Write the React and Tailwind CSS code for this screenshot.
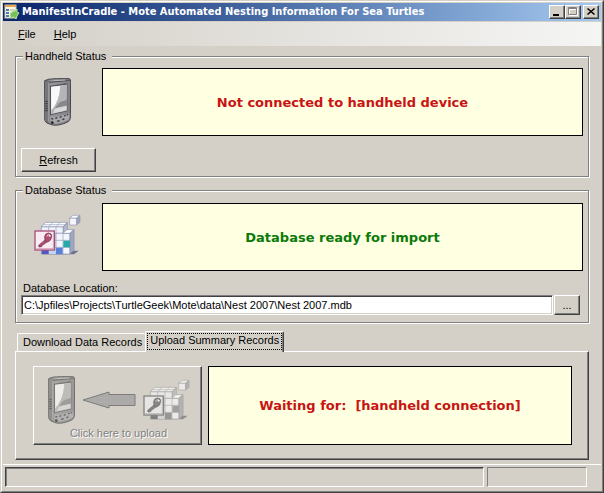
import React from "react";

const raised =
  "border border-t-white border-l-white border-r-[#404040] border-b-[#404040] shadow-[inset_-1px_-1px_0_#808080] bg-[#d4d0c8]";

const HandheldIcon = () => (
  <svg width="28" height="48" viewBox="0 0 84 144" className="shrink-0" aria-hidden="true">
    <defs>
      <linearGradient id="case" x1="0" y1="0" x2="1" y2="0">
        <stop offset="0" stopColor="#5c5c60" />
        <stop offset="0.25" stopColor="#98989c" />
        <stop offset="1" stopColor="#808084" />
      </linearGradient>
      <linearGradient id="glass" x1="0" y1="0" x2="1" y2="1">
        <stop offset="0" stopColor="#f4f4f4" />
        <stop offset="0.5" stopColor="#d8d8d8" />
        <stop offset="1" stopColor="#a4a4a4" />
      </linearGradient>
    </defs>
    <path d="M5 8 Q14 2 40 2 L78 2 Q83 3 83 9 L82 122 Q80 132 62 137 Q42 144 28 141 L12 135 Q5 131 5 124Z" fill="url(#case)" stroke="#444448" strokeWidth="3" />
    <path d="M6 9 L17 13 L17 132 L8 130 Q5 126 5 120Z" fill="#77777b" />
    <path d="M17 13 L80 7" stroke="#54545a" strokeWidth="4" />
    <path d="M31 8 L67 6" stroke="#b8b8bc" strokeWidth="3" />
    <path d="M17 14 L17 131" stroke="#b4b4b8" strokeWidth="2" />
    <path d="M21 23 L73 16 L73 100 L21 112Z" fill="#505054" />
    <path d="M24 26 L71 20 L71 98 L24 108Z" fill="url(#glass)" />
    <path d="M25 27 L52 24 Q49 72 25 97Z" fill="#f8f8f8" />
    <path d="M71 20 L71 64 Q45 70 36 105 L25 107 L25 97 Q49 72 52 24Z" fill="#b4b4b6" />
    <path d="M71 65 L71 83 L36 91 Q43 77 52 72Z" fill="#88888c" />
    <path d="M71 83 L71 97 L30 106 L36 92Z" fill="#d8d8d8" />
    <path d="M7 70h7M7 77h7M7 84h7M7 91h7M7 98h7" stroke="#303034" strokeWidth="3" />
    <path d="M22 118 Q48 117 79 105 L79 123 Q60 134 35 136 Q22 133 22 118Z" fill="#a8a8ac" />
    <path d="M25 123l6-1M37 121l6-2M50 118l6-2M63 114l5-2M71 111l5-2M42 130l8-2M58 125l6-2" stroke="#38383c" strokeWidth="4" />
    <circle cx="28" cy="134" r="4" fill="#242428" />
  </svg>
);

const DatabaseIcon = () => (
  <svg width="47" height="42" viewBox="0 0 141 126" className="shrink-0" aria-hidden="true">
    <path d="M22 121 L120 121 L134 110 L110 110Z" fill="#70708c" />
    <path d="M22 38 L88 38 L88 120 L22 120Z" fill="#eef2fa" stroke="#8890ac" strokeWidth="2" />
    <path d="M22 38 L35 25 L100 25 L88 38Z" fill="#fff" stroke="#8890ac" strokeWidth="2" />
    <path d="M88 38 L100 25 L100 50 L88 60Z" fill="#b0b8cc" stroke="#8890ac" strokeWidth="2" />
    <path d="M44 38 L57 25 M66 38 L79 25 M44 38V120 M66 38V120 M28 32H94 M22 58H88 M22 79H88 M22 100H88" stroke="#98a0bc" strokeWidth="2" />
    <path d="M66 58 H108 V120 H66Z" fill="#f3f6fc" stroke="#8890ac" strokeWidth="2" />
    <path d="M87 58 L98 47 L120 47 L108 58Z" fill="#fff" stroke="#8890ac" strokeWidth="2" />
    <path d="M108 58 L120 47 L120 109 L108 120Z" fill="#a0a8c0" stroke="#8088a8" strokeWidth="2" />
    <path d="M87 58V120 M66 79H108 L120 68 M66 100H108 L120 89" fill="none" stroke="#98a0bc" strokeWidth="2" />
    <rect x="88" y="80" width="20" height="20" fill="#28a8a8" />
    <rect x="23" y="105" width="21" height="15" fill="#5058c0" />
    <rect x="66" y="101" width="20" height="19" fill="#5880d8" />
    <rect x="45" y="108" width="20" height="12" fill="#c4d4f4" />
    <path d="M107 12 L128 12 L128 33 L107 33Z" fill="#f4f6fc" stroke="#9498b0" strokeWidth="2" />
    <path d="M107 12 L117 4 L138 4 L128 12Z" fill="#fff" stroke="#9498b0" strokeWidth="2" />
    <path d="M128 12 L138 4 L138 25 L128 33Z" fill="#9ca4bc" stroke="#9498b0" strokeWidth="2" />
    <rect x="3" y="51" width="58" height="57" fill="#f8ecf2" stroke="#a85078" strokeWidth="4" />
    <path d="M7 104 H58 V55" fill="none" stroke="#d8a8c0" strokeWidth="3" />
    <path d="M34 77 L14 94 L15 99 L23 98 L25 93 L31 90 L40 83Z" fill="#b05070" stroke="#702848" strokeWidth="2" />
    <path d="M32 67 Q34 57 44 57 Q54 58 53 67 Q52 81 41 84 Q31 83 32 67Z" fill="#b05070" stroke="#702848" strokeWidth="2" />
    <path d="M38 67 Q41 61 47 62" fill="none" stroke="#e8a8bc" strokeWidth="4" />
    <circle cx="47" cy="65" r="3" fill="#fff" />
  </svg>
);

const AppIcon = () => (
  <svg width="16" height="16" viewBox="0 0 16 16" className="shrink-0" aria-hidden="true">
    <rect x="1" y="1" width="11" height="13" fill="#f8f8e8" stroke="#c8c8b0" />
    <rect x="1" y="1" width="11" height="2" fill="#e8a850" />
    <path d="M2 6h3M2 9h3M2 12h3" stroke="#5078b0" strokeWidth="2" />
    <path d="M6 6h5M6 9h5M6 12h4" stroke="#a8b890" />
    <path d="M6 11 Q7 7 11 7 L13 5 L13 8 L15 9 L13 12 L12 15 L10 13 L7 14Z" fill="#78c058" stroke="#b0e098" />
  </svg>
);

const ArrowIcon = () => (
  <svg width="54" height="18" viewBox="0 0 54 18" className="shrink-0" aria-hidden="true">
    <path d="M1 9 L27 1 V3.5 H53 V14.5 H27 V17Z" fill="#9c9c9c" stroke="#585858" />
  </svg>
);

const StatusBox = ({ className, children }) => (
  <div
    role="status"
    className={`flex flex-1 items-center justify-center whitespace-pre border border-black bg-[#ffffe1] font-['DejaVu_Sans',Verdana,sans-serif] text-[13px] font-bold ${className}`}
  >
    {children}
  </div>
);

const Group = ({ title, children }) => (
  <fieldset className="min-w-0 border border-[#808080] px-[5px] shadow-[1px_1px_0_#fff,inset_1px_1px_0_#fff]">
    <legend className="ml-[2px] bg-[#d4d0c8] pl-[2px] pr-[6px] leading-[12px]">{title}</legend>
    {children}
  </fieldset>
);

const TitleBar = () => (
  <header className="flex h-[18px] items-center bg-linear-to-r from-[#0a246a] to-[#a6caf0] pl-[1px] pr-[2px]">
    <AppIcon />
    <h1 className="ml-[2px] flex-1 truncate font-['DejaVu_Sans_Condensed','DejaVu_Sans',Tahoma,sans-serif] text-[11px] font-bold leading-[18px] text-white">
      ManifestInCradle - Mote Automated Nesting Information For Sea Turtles
    </h1>
    <div className="flex">
      <button aria-label="Minimize" className={`h-[14px] w-4 ${raised}`}>
        <svg width="14" height="12" viewBox="0 0 14 12">
          <path d="M3 9h6" stroke="#000" strokeWidth="2" />
        </svg>
      </button>
      <button aria-label="Maximize" disabled className={`h-[14px] w-4 ${raised}`}>
        <svg width="14" height="12" viewBox="0 0 14 12">
          <path d="M3.5 2.5h8v7h-8z M3.5 3.5h8" fill="none" stroke="#fff" />
          <path d="M2.5 1.5h8v7h-8z M2.5 2.5h8" fill="none" stroke="#808080" />
        </svg>
      </button>
      <button aria-label="Close" className={`ml-[2px] h-[14px] w-4 ${raised}`}>
        <svg width="14" height="12" viewBox="0 0 14 12">
          <path d="M3.5 2.5l7 6M10.5 2.5l-7 6" stroke="#000" strokeWidth="1.6" />
        </svg>
      </button>
    </div>
  </header>
);

const App = () => {
  return (
    <div className="flex min-h-screen flex-col border border-t-[#d4d0c8] border-l-[#d4d0c8] border-r-[#404040] border-b-[#404040] bg-[#d4d0c8] font-['Liberation_Sans',Arial,sans-serif] text-[11px] leading-[13px] text-black">
      <div className="flex flex-1 flex-col border border-t-white border-l-white border-r-[#808080] border-b-[#808080] p-[1px]">
        <TitleBar />
        <nav className="mt-[1px] flex h-6 items-center gap-[18px] bg-linear-to-r from-[#d4d0c8] to-[#f5f5f4] pl-[15px]">
          <button>
            <u>F</u>ile
          </button>
          <button>
            <u>H</u>elp
          </button>
        </nav>

        <main className="flex flex-1 flex-col pl-3 pr-3 pt-1">
          <Group title="Handheld Status">
            <div className="mt-[6px] flex">
              <div className="flex w-[81px] justify-center pl-[22px] pr-[31px] pt-[10px]">
                <HandheldIcon />
              </div>
              <StatusBox className="h-[68px] text-[#c81414]">Not connected to handheld device</StatusBox>
            </div>
            <button className={`mb-1 mt-3 h-6 w-[75px] ${raised}`}>
              <u>R</u>efresh
            </button>
          </Group>

          <div className="mt-[7px]">
            <Group title="Database Status">
              <div className="mt-[7px] flex">
                <div className="flex w-[81px] pl-[13px] pt-[11px]">
                  <DatabaseIcon />
                </div>
                <StatusBox className="h-[68px] text-[#0a7a0a]">Database ready for import</StatusBox>
              </div>
              <label htmlFor="location" className="ml-[2px] mt-[11px] block">
                Database Location:
              </label>
              <div className="mb-[7px] mr-[3px] flex gap-[1px]">
                <input
                  id="location"
                  type="text"
                  defaultValue="C:\Jpfiles\Projects\TurtleGeek\Mote\data\Nest 2007\Nest 2007.mdb"
                  className="h-5 min-w-0 flex-1 border border-t-[#808080] border-l-[#808080] border-r-white border-b-white bg-white px-[2px] shadow-[inset_1px_1px_0_#404040,inset_-1px_-1px_0_#d4d0c8] outline-none"
                />
                <button aria-label="Browse" className={`h-5 w-[26px] ${raised}`}>
                  ...
                </button>
              </div>
            </Group>
          </div>

          <div role="tablist" className="mt-2 flex items-end pl-[2px]">
            <button
              role="tab"
              aria-selected="false"
              className="h-[18px] rounded-t-[2px] border-l border-t border-white pl-[5px] pr-[3px]"
            >
              Download Data Records
            </button>
            <button
              role="tab"
              aria-selected="true"
              className="relative -mb-px h-[21px] rounded-t-[2px] border border-b-0 border-l-white border-r-[#404040] border-t-white bg-[#d4d0c8] px-[1px] pb-[2px] pt-[1px] shadow-[inset_-1px_0_0_#808080]"
            >
              <span className="block border border-dotted border-black px-[2px] pb-[2px]">Upload Summary Records</span>
            </button>
          </div>
          <section
            role="tabpanel"
            className="flex gap-[6px] border border-b-[#404040] border-l-white border-r-[#404040] border-t-white py-[14px] pl-[17px] pr-4 shadow-[inset_-1px_-1px_0_#808080]"
          >
            <button disabled className={`flex h-[79px] w-[169px] flex-col pl-[13px] pr-[11px] pt-[9px] ${raised}`}>
              <span className="flex w-full items-center justify-between opacity-70 grayscale">
                <HandheldIcon />
                <ArrowIcon />
                <DatabaseIcon />
              </span>
              <span className="mt-[3px] w-full text-center text-[#808080] [text-shadow:1px_1px_0_#fff]">Click here to upload</span>
            </button>
            <StatusBox className="h-[79px] text-[#c81414]">Waiting for:  [handheld connection]</StatusBox>
          </section>
        </main>

        <footer className="mt-[3px] flex gap-[3px] border-t border-white pb-[3px] pl-[2px] pr-[14px] pt-[2px]">
          <div className="h-5 flex-1 border border-b-white border-l-[#404040] border-r-white border-t-[#404040] shadow-[inset_1px_1px_0_#808080]" />
          <div className="h-5 w-[100px] border border-b-white border-l-[#808080] border-r-white border-t-[#808080]" />
        </footer>
      </div>
    </div>
  );
};

export default App;
